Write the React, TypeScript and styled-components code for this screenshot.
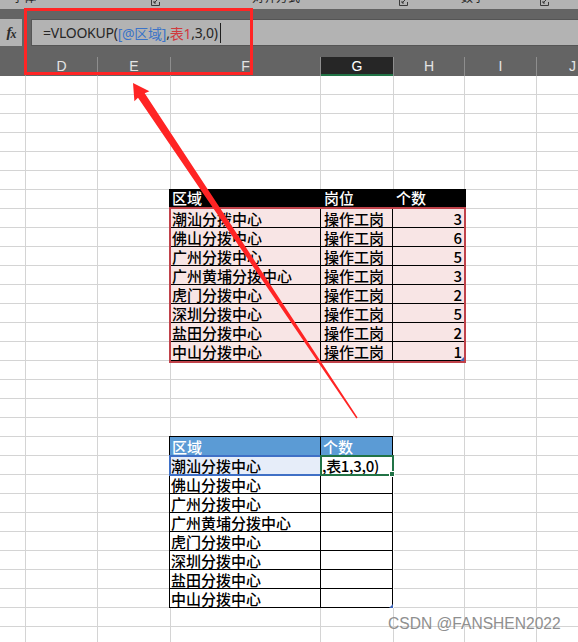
import React from 'react';
import styled, { createGlobalStyle } from 'styled-components';

const GlobalStyle = createGlobalStyle`
  *, *::before, *::after { box-sizing: border-box; }
  html, body { margin: 0; padding: 0; background: #ffffff; overflow: hidden; }
  body {
    width: 578px;
    height: 642px;
    font-family: "Noto Sans", "Noto Sans CJK SC", sans-serif;
  }
`;

const COLS = [26, 72, 73, 150, 73, 71, 72, 72];
const COL_TEMPLATE = COLS.map((c) => `${c}px`).join(' ');
const LETTERS = ['', 'D', 'E', 'F', 'G', 'H', 'I', 'J'];
const ROWS = 30;

const CJK = `"Noto Sans CJK SC", "Noto Sans", sans-serif`;

const Screen = styled.div`
  position: relative;
  width: 578px;
  height: 642px;
  overflow: hidden;
  background: #ffffff;
`;

/* ---------- ribbon remnant ---------- */
const RibbonStrip = styled.div`
  display: flex;
  height: 9px;
  background: #b3b3b3;
  overflow: hidden;
`;

const RibbonGroup = styled.div<{ $width: number; $pad: number }>`
  display: flex;
  align-items: flex-start;
  width: ${(p) => p.$width}px;
  flex: none;
  padding-left: ${(p) => p.$pad}px;
  padding-right: 2px;
`;

const RibbonLabel = styled.span`
  margin-top: -11px;
  font-family: ${CJK};
  font-size: 12px;
  line-height: 16px;
  color: #262626;
  white-space: nowrap;
`;

const Launcher = styled.svg`
  margin-left: auto;
  margin-top: -3px;
  flex: none;
`;

/* ---------- formula bar ---------- */
const ChromeBand = styled.div`
  background: #646464;
  padding-top: 10px;
`;

const FormulaRow = styled.div`
  display: flex;
  height: 27px;
`;

const FxBox = styled.div`
  width: 22px;
  flex: none;
  background: #b3b3b3;
  display: flex;
  align-items: center;
  justify-content: center;
  font-family: "Liberation Serif", "DejaVu Serif", serif;
  font-style: italic;
  font-weight: bold;
  font-size: 15px;
  color: #2b2b2b;
  letter-spacing: -1px;
`;

const FxSub = styled.span`
  font-size: 12px;
  margin-top: 3px;
`;

const FormulaInput = styled.div`
  flex: 1;
  margin-left: 9px;
  background: #b3b3b3;
  border: 1px solid #555555;
  border-right: none;
  padding-left: 11px;
  display: flex;
  align-items: center;
  font-family: "Noto Sans", "Noto Sans CJK SC", sans-serif;
  font-size: 14px;
  letter-spacing: -0.25px;
  white-space: nowrap;
  color: #262626;
`;

const Token = styled.span<{ $color?: string }>`
  color: ${(p) => p.$color || '#262626'};
`;

const Caret = styled.span`
  display: inline-block;
  width: 1px;
  height: 20px;
  margin-left: 2px;
  background: #1e1e1e;
`;

/* ---------- column headers ---------- */
const HeaderBand = styled.div`
  background: #646464;
  padding-top: 11px;
`;

const HeaderRow = styled.div`
  display: grid;
  grid-template-columns: ${COL_TEMPLATE};
  height: 19px;
`;

const HeaderCell = styled.div<{ $selected?: boolean }>`
  border-right: 1px solid #8e8e8e;
  background: ${(p) => (p.$selected ? '#262626' : 'transparent')};
  box-shadow: ${(p) => (p.$selected ? 'inset 0 -2px 0 #217346' : 'none')};
  color: ${(p) => (p.$selected ? '#ffffff' : '#e4e4e4')};
  font-family: "Liberation Sans", Arial, sans-serif;
  font-size: 14px;
  line-height: 19px;
  text-align: center;
`;

/* ---------- sheet ---------- */
const Sheet = styled.div`
  display: grid;
  grid-template-columns: ${COL_TEMPLATE};
  grid-auto-rows: 19px;
  font-family: ${CJK};
  font-size: 15px;
  font-weight: 500;
`;

const GridCell = styled.div`
  border-right: 1px solid #d4d4d4;
  border-bottom: 1px solid #d4d4d4;
`;

/* table 1 */
const Table1 = styled.div`
  grid-column: 4 / span 3;
  grid-row: 7 / span 9;
  margin: -1px -1px 0 -2px;
  display: flex;
  flex-direction: column;
  position: relative;
  z-index: 1;
`;

const T1Header = styled.div`
  height: 18px;
  flex: none;
  display: grid;
  grid-template-columns: 152px 72px 1fr;
  background: #000000;
  color: #ffffff;
  line-height: 18px;
`;

const T1HeadCell = styled.div`
  padding-left: 3px;
  white-space: nowrap;
`;

const T1Body = styled.div`
  flex: 1;
  display: flex;
  flex-direction: column;
  border: 2px solid #c0424a;
  background: #f8e5e5;
  position: relative;
`;

const T1Row = styled.div`
  display: grid;
  grid-template-columns: 150px 72px 1fr;
  height: 19px;
  flex: none;
  border-bottom: 1px solid #000000;
  &:last-child {
    border-bottom: none;
    height: 17px;
  }
`;

const T1Cell = styled.div<{ $align?: 'left' | 'right'; $pad?: number }>`
  border-right: 1px solid #000000;
  text-align: ${(p) => p.$align || 'left'};
  padding: 1px ${(p) => (p.$align === 'right' ? 2 : 0)}px 0 ${(p) => p.$pad ?? 1}px;
  line-height: 17px;
  color: #000000;
  white-space: nowrap;
  overflow: hidden;
  &:last-child {
    border-right: none;
  }
`;

const ResizeMark = styled.span`
  position: absolute;
  right: 0;
  bottom: 0;
  width: 0;
  height: 0;
  border-left: 4px solid transparent;
  border-bottom: 4px solid #3e66b8;
`;

/* table 2 */
const Table2 = styled.div`
  grid-column: 4 / span 2;
  grid-row: 20 / span 9;
  margin: -1px 1px 0 -2px;
  display: grid;
  grid-template-columns: 151px 1fr;
  grid-auto-rows: 19px;
  border-left: 1px solid #000000;
  border-top: 1px solid #000000;
  position: relative;
  z-index: 1;
`;

type T2Variant = 'head' | 'ref' | 'active' | 'plain';

const T2Cell = styled.div<{ $variant: T2Variant }>`
  position: relative;
  border-right: 1px solid #000000;
  border-bottom: 1px solid #000000;
  padding: 1px 0 0 ${(p) => (p.$variant === 'head' ? 2 : 1)}px;
  line-height: 17px;
  white-space: nowrap;
  background: ${(p) =>
    p.$variant === 'head' ? '#5b9bd5' : p.$variant === 'ref' ? '#e6edf9' : '#ffffff'};
  color: ${(p) => (p.$variant === 'head' ? '#ffffff' : '#000000')};
  outline: ${(p) =>
    p.$variant === 'ref'
      ? '2px solid #3f70c6'
      : p.$variant === 'active'
      ? '2px solid #217346'
      : 'none'};
  outline-offset: -1px;
  z-index: ${(p) => (p.$variant === 'active' ? 3 : p.$variant === 'ref' ? 2 : 0)};
`;

const EditText = styled.span`
  display: block;
  overflow: hidden;
  letter-spacing: -0.3px;
`;

const FillHandle = styled.span`
  position: absolute;
  right: -3px;
  bottom: -3px;
  width: 6px;
  height: 6px;
  background: #217346;
  border: 1px solid #ffffff;
`;

/* overlays */
const Annotations = styled.svg`
  position: absolute;
  left: 0;
  top: 0;
  pointer-events: none;
  z-index: 10;
`;

const Watermark = styled.div`
  position: absolute;
  left: 388px;
  top: 614px;
  font-family: "Liberation Sans", Arial, sans-serif;
  font-size: 15.6px;
  line-height: 20px;
  color: #8f8f8f;
  white-space: nowrap;
  z-index: 11;
`;

const TABLE1 = [
  ['潮汕分拨中心', '操作工岗', '3'],
  ['佛山分拨中心', '操作工岗', '6'],
  ['广州分拨中心', '操作工岗', '5'],
  ['广州黄埔分拨中心', '操作工岗', '3'],
  ['虎门分拨中心', '操作工岗', '2'],
  ['深圳分拨中心', '操作工岗', '5'],
  ['盐田分拨中心', '操作工岗', '2'],
  ['中山分拨中心', '操作工岗', '1'],
];

const LauncherIcon = () => (
  <Launcher width="9" height="9" viewBox="0 0 9 9">
    <path d="M0.5 0.5 V8.5 H8.5 V5" fill="none" stroke="#3a3a3a" strokeWidth="1" />
    <path d="M3 6 L8 1 M5 6 H3 V4" fill="none" stroke="#3a3a3a" strokeWidth="1" />
  </Launcher>
);

export default function App() {
  const blankCount = ROWS * COLS.length - 27 - 18;
  const blanks = Array.from({ length: blankCount }, (_, i) => <GridCell key={`b${i}`} />);

  return (
    <Screen>
      <GlobalStyle />
      <RibbonStrip>
        <RibbonGroup $width={162} $pad={12}>
          <RibbonLabel>字体</RibbonLabel>
          <LauncherIcon />
        </RibbonGroup>
        <RibbonGroup $width={248} $pad={90}>
          <RibbonLabel>对齐方式</RibbonLabel>
          <LauncherIcon />
        </RibbonGroup>
        <RibbonGroup $width={141} $pad={51}>
          <RibbonLabel>数字</RibbonLabel>
          <LauncherIcon />
        </RibbonGroup>
      </RibbonStrip>

      <ChromeBand>
        <FormulaRow>
          <FxBox>
            f<FxSub>x</FxSub>
          </FxBox>
          <FormulaInput>
            <Token>=VLOOKUP(</Token>
            <Token $color="#3b73c8">[@区域]</Token>
            <Token>,</Token>
            <Token $color="#d03a3e">表1</Token>
            <Token>,3,0)</Token>
            <Caret />
          </FormulaInput>
        </FormulaRow>
      </ChromeBand>

      <HeaderBand>
        <HeaderRow>
          {LETTERS.map((l, i) => (
            <HeaderCell key={i} $selected={l === 'G'}>
              {l}
            </HeaderCell>
          ))}
        </HeaderRow>
      </HeaderBand>

      <Sheet>
        <Table1>
          <T1Header>
            <T1HeadCell>区域</T1HeadCell>
            <T1HeadCell>岗位</T1HeadCell>
            <T1HeadCell>个数</T1HeadCell>
          </T1Header>
          <T1Body>
            {TABLE1.map((r) => (
              <T1Row key={r[0]}>
                <T1Cell $pad={1}>{r[0]}</T1Cell>
                <T1Cell $pad={3}>{r[1]}</T1Cell>
                <T1Cell $align="right">{r[2]}</T1Cell>
              </T1Row>
            ))}
            <ResizeMark />
          </T1Body>
        </Table1>

        <Table2>
          <T2Cell $variant="head">区域</T2Cell>
          <T2Cell $variant="head">个数</T2Cell>
          {TABLE1.map((r, i) => (
            <React.Fragment key={r[0]}>
              <T2Cell $variant={i === 0 ? 'ref' : 'plain'}>{r[0]}</T2Cell>
              <T2Cell $variant={i === 0 ? 'active' : 'plain'}>
                {i === 0 && (
                  <>
                    <EditText>,表1,3,0)</EditText>
                    <FillHandle />
                  </>
                )}
              </T2Cell>
            </React.Fragment>
          ))}
          <ResizeMark />
        </Table2>

        {blanks}
      </Sheet>

      <Annotations width="578" height="642" viewBox="0 0 578 642">
        <rect x="25.5" y="9.5" width="226" height="64" fill="none" stroke="#ff2424" strokeWidth="3" />
        <polygon
          points="133,83 149.4,91.3 144.7,93.2 357.6,417.6 356.4,418.4 138,97.7 134.4,101.3"
          fill="#ff2424"
        />
      </Annotations>

      <Watermark>CSDN @FANSHEN2022</Watermark>
    </Screen>
  );
}
